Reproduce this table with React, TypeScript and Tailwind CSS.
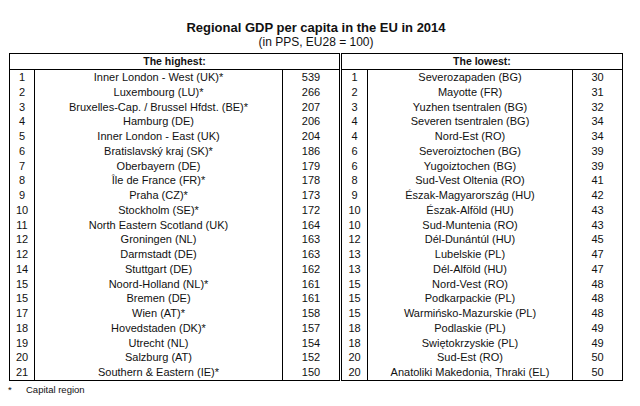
import React from "react";

type Row = [string, string, string];

const highest: Row[] = [
  ["1", "Inner London - West (UK)*", "539"],
  ["2", "Luxembourg (LU)*", "266"],
  ["3", "Bruxelles-Cap. / Brussel Hfdst. (BE)*", "207"],
  ["4", "Hamburg (DE)", "206"],
  ["5", "Inner London - East (UK)", "204"],
  ["6", "Bratislavský kraj (SK)*", "186"],
  ["7", "Oberbayern (DE)", "179"],
  ["8", "Île de France (FR)*", "178"],
  ["9", "Praha (CZ)*", "173"],
  ["10", "Stockholm (SE)*", "172"],
  ["11", "North Eastern Scotland (UK)", "164"],
  ["12", "Groningen (NL)", "163"],
  ["12", "Darmstadt (DE)", "163"],
  ["14", "Stuttgart (DE)", "162"],
  ["15", "Noord-Holland (NL)*", "161"],
  ["15", "Bremen (DE)", "161"],
  ["17", "Wien (AT)*", "158"],
  ["18", "Hovedstaden (DK)*", "157"],
  ["19", "Utrecht (NL)", "154"],
  ["20", "Salzburg (AT)", "152"],
  ["21", "Southern & Eastern (IE)*", "150"],
];

const lowest: Row[] = [
  ["1", "Severozapaden (BG)", "30"],
  ["2", "Mayotte (FR)", "31"],
  ["3", "Yuzhen tsentralen (BG)", "32"],
  ["4", "Severen tsentralen (BG)", "34"],
  ["4", "Nord-Est (RO)", "34"],
  ["6", "Severoiztochen (BG)", "39"],
  ["6", "Yugoiztochen (BG)", "39"],
  ["8", "Sud-Vest Oltenia (RO)", "41"],
  ["9", "Észak-Magyarország (HU)", "42"],
  ["10", "Észak-Alföld (HU)", "43"],
  ["10", "Sud-Muntenia (RO)", "43"],
  ["12", "Dél-Dunántúl (HU)", "45"],
  ["13", "Lubelskie (PL)", "47"],
  ["13", "Dél-Alföld (HU)", "47"],
  ["15", "Nord-Vest (RO)", "48"],
  ["15", "Podkarpackie (PL)", "48"],
  ["15", "Warmińsko-Mazurskie (PL)", "48"],
  ["18", "Podlaskie (PL)", "49"],
  ["18", "Swiętokrzyskie (PL)", "49"],
  ["20", "Sud-Est (RO)", "50"],
  ["20", "Anatoliki Makedonia, Thraki (EL)", "50"],
];

function Column({
  items,
  className,
}: {
  items: string[];
  className: string;
}) {
  return (
    <div className={"flex flex-col " + className}>
      {items.map((t, i) => (
        <div
          key={i}
          className="h-[14.75px] leading-[14.75px] text-center whitespace-nowrap"
        >
          {t}
        </div>
      ))}
    </div>
  );
}

function Table({
  title,
  rows,
  width,
  rankW,
  nameW,
  valueW,
}: {
  title: string;
  rows: Row[];
  width: string;
  rankW: string;
  nameW: string;
  valueW: string;
}) {
  return (
    <div className={"border border-black flex flex-col " + width}>
      <div className="h-[16px] border-b border-black text-center font-bold text-[10.5px] leading-[15px]">
        {title}
      </div>
      <div className="flex">
        <Column items={rows.map((r) => r[0])} className={rankW + " border-r border-black"} />
        <Column items={rows.map((r) => r[1])} className={nameW + " border-r border-black"} />
        <Column items={rows.map((r) => r[2])} className={valueW} />
      </div>
    </div>
  );
}

export default function App() {
  return (
    <div
      className="w-[640px] h-[406px] bg-white text-[#111] overflow-hidden"
      style={{ fontFamily: '"Liberation Sans", Arial, sans-serif' }}
    >
      <div className="pl-[9px] pt-[21px] w-[623px]">
        <div className="text-center font-bold text-[13px] leading-[14px]">
          Regional GDP per capita in the EU in 2014
        </div>
        <div className="text-center text-[12px] leading-[14px]">
          (in PPS, EU28 = 100)
        </div>
        <div className="mt-[4px] flex gap-[1px] text-[11px]">
          <Table
            title="The highest:"
            rows={highest}
            width="w-[331px]"
            rankW="w-[25px]"
            nameW="w-[248px]"
            valueW="flex-1"
          />
          <Table
            title="The lowest:"
            rows={lowest}
            width="w-[282px]"
            rankW="w-[26px]"
            nameW="w-[205px]"
            valueW="flex-1"
          />
        </div>
      </div>
      <div className="flex pl-[8px] mt-[3px] text-[9.5px] leading-[11px]">
        <div className="w-[18px]">*</div>
        <div>Capital region</div>
      </div>
    </div>
  );
}
